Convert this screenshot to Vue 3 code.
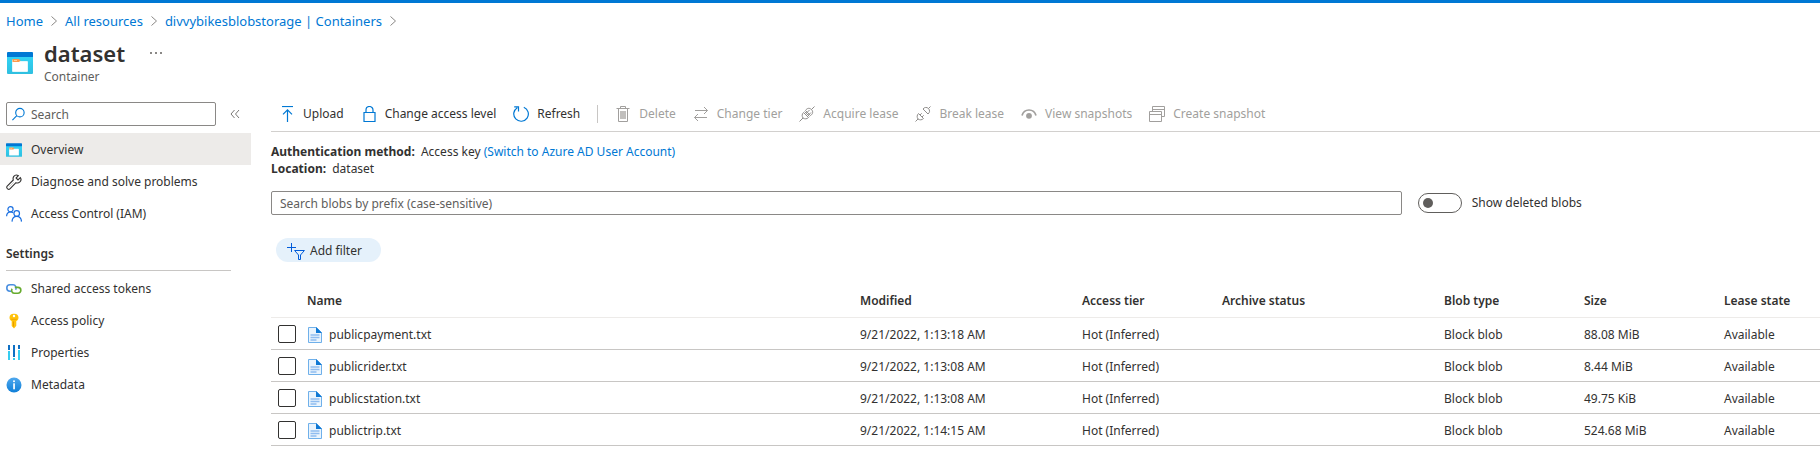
<script setup>
import { ref } from 'vue'

const crumbs = ['Home', 'All resources', 'divvybikesblobstorage | Containers']

const topNav = [
  { label: 'Overview', icon: 'container', active: true },
  { label: 'Diagnose and solve problems', icon: 'wrench' },
  { label: 'Access Control (IAM)', icon: 'people' },
]
const settingsNav = [
  { label: 'Shared access tokens', icon: 'chain' },
  { label: 'Access policy', icon: 'key' },
  { label: 'Properties', icon: 'bars' },
  { label: 'Metadata', icon: 'info' },
]

const primaryCommands = [
  { label: 'Upload', icon: 'upload' },
  { label: 'Change access level', icon: 'lock' },
  { label: 'Refresh', icon: 'refresh' },
]
const blobCommands = [
  { label: 'Delete', icon: 'trash' },
  { label: 'Change tier', icon: 'swap' },
  { label: 'Acquire lease', icon: 'plug' },
  { label: 'Break lease', icon: 'unplug' },
  { label: 'View snapshots', icon: 'eye' },
  { label: 'Create snapshot', icon: 'windows' },
]

const blobs = ref([
  { name: 'publicpayment.txt', modified: '9/21/2022, 1:13:18 AM', size: '88.08 MiB', selected: false },
  { name: 'publicrider.txt', modified: '9/21/2022, 1:13:08 AM', size: '8.44 MiB', selected: false },
  { name: 'publicstation.txt', modified: '9/21/2022, 1:13:08 AM', size: '49.75 KiB', selected: false },
  { name: 'publictrip.txt', modified: '9/21/2022, 1:14:15 AM', size: '524.68 MiB', selected: false },
])

const menuFilter = ref('')
const prefix = ref('')
const showDeleted = ref(false)
</script>

<template>
  <div class="portal">
    <svg class="sprite" aria-hidden="true">
      <defs>
        <linearGradient id="cyan" x1="0" y1="0" x2="0" y2="1">
          <stop offset="0" stop-color="#32d4f5" />
          <stop offset="1" stop-color="#2fbfe0" />
        </linearGradient>
        <linearGradient id="infoBlue" x1="0" y1="0" x2="0" y2="1">
          <stop offset="0" stop-color="#4fa8ee" />
          <stop offset="1" stop-color="#0f7fd8" />
        </linearGradient>
      </defs>
      <symbol id="container" viewBox="0 0 26 22">
        <rect y="4" width="26" height="18" rx="1" fill="url(#cyan)" />
        <path d="M0 5V1a1 1 0 0 1 1-1h24a1 1 0 0 1 1 1v4z" fill="#0078d4" />
        <path d="M5 8.500a1 1 0 0 1 1-1h5.500l1.500 1.500h7a1 1 0 0 1 1 1V19a1 1 0 0 1-1 1H6a1 1 0 0 1-1-1z" fill="#e3f7fb" />
        <rect x="6" y="10" width="14" height="9" fill="#fff" />
        <path d="M5.500 7h6.500l1.500 1.500-1.500 1.500H5.500z" fill="#ff9a4a" />
        <rect x="7" y="8" width="3" height="1" fill="#ffd0a0" />
      </symbol>
      <symbol id="wrench" viewBox="0 0 16 16">
        <path d="M14.300 3.600 12 5.900 10.100 4l2.300-2.300C10.900.7 8.900 1 7.800 2.400 7 3.500 6.900 4.800 7.300 6L1.200 12.100a1.600 1.600 0 0 0 0 2.300l.4.400c.7.600 1.700.6 2.300 0L10 8.700c1.300.5 2.800.2 3.900-.8 1.200-1.200 1.400-3 .4-4.300z" fill="#fff" stroke="#323130" stroke-width="1.100" />
        <path d="m2.800 13.200 5-5" stroke="#c8c6c4" stroke-width=".8" />
      </symbol>
      <symbol id="people" viewBox="0 0 16 16">
        <g fill="none" stroke="#1a6fe0" stroke-width="1.200">
          <circle cx="4.500" cy="3.300" r="2.600" />
          <path d="M.6 10.200c0-2.500 1.600-4.200 3.900-4.200 1 0 1.900.3 2.600.9" />
          <circle cx="10.700" cy="7.500" r="2.800" />
          <path d="M6 15.600c.2-3 2-5.200 4.700-5.200s4.600 2.200 4.800 5.200" />
        </g>
      </symbol>
      <symbol id="chain" viewBox="0 0 16 16">
        <g fill="none" stroke-width="1.600">
          <path d="M5.500 10.200H4A3.200 3.200 0 0 1 4 3.800h3a3.200 3.200 0 0 1 2.600 5" stroke="#4a8fe0" />
          <path d="M8.800 6.400h3.100a2.900 2.900 0 0 1 0 5.900H8.600a2.900 2.900 0 0 1-2.500-4.500" stroke="#67ab2f" />
        </g>
      </symbol>
      <symbol id="key" viewBox="0 0 16 16">
        <path d="M7.500.7h1c2.400 0 4 1.500 4 3.800 0 1.700-.8 2.900-2.200 3.600v4.700L8 15.500 5.700 13V8.100C4.300 7.400 3.500 6.200 3.500 4.500 3.500 2.200 5.100.7 7.500.7z" fill="#ffc20a" />
        <circle cx="8" cy="3" r="1.200" fill="#fff" />
        <path d="M7 8.500v4.600l1 1.100V8.500z" fill="#e89b00" />
        <path d="M5.200 6.300h5.600" stroke="#f2a600" />
      </symbol>
      <symbol id="bars" viewBox="0 0 16 16">
        <path d="M2 0h2v5H2zM7 0h2v12H7zM12 0h2v4h-2z" fill="#0f70c4" />
        <path d="M2 6h2v9H2zM7 13h2v2H7zM12 5h2v10h-2z" fill="#36cdf0" />
      </symbol>
      <symbol id="info" viewBox="0 0 16 16">
        <circle cx="8" cy="8" r="7.500" fill="url(#infoBlue)" />
        <circle cx="8" cy="4.300" r="1" fill="#fff" />
        <rect x="7.200" y="6.300" width="1.700" height="6" fill="#fff" />
      </symbol>
      <symbol id="search" viewBox="0 0 16 16">
        <g fill="none" stroke="#0078d4" stroke-width="1.200">
          <circle cx="9.500" cy="6" r="4.500" />
          <path d="M6.200 9.300 1.500 14" />
        </g>
      </symbol>
      <symbol id="collapse" viewBox="0 0 10 10">
        <path d="M4.500 1 1 5l3.500 4M9 1 5.500 5 9 9" fill="none" stroke="#7a7876" />
      </symbol>
      <symbol id="chevron" viewBox="0 0 8 12">
        <path d="m1.500 1.500 5 4.500-5 4.500" fill="none" stroke="#8a8886" />
      </symbol>
      <symbol id="upload" viewBox="0 0 16 16">
        <g fill="none" stroke="#0078d4">
          <path d="M3 .5h11" stroke-width="1.200" />
          <path d="M8.500 16V4M4 8.300l4.500-4.500L13 8.300" stroke-width="1.200" />
        </g>
      </symbol>
      <symbol id="lock" viewBox="0 0 16 16">
        <path d="M3 6.500h11v9H3zM5 6.500V4a3.500 3.500 0 0 1 7 0v2.500" fill="none" stroke="#0078d4" stroke-width="1.200" />
      </symbol>
      <symbol id="refresh" viewBox="0 0 16 16">
        <path d="M10.800 1.200a7.300 7.300 0 1 1-6.500.500M1.200.900H5.500V5.500" fill="none" stroke="#0078d4" stroke-width="1.200" />
      </symbol>
      <symbol id="trash" viewBox="0 0 16 16">
        <g fill="none" stroke="#a19f9d">
          <path d="M1.500 2.500h13M5.500 2.500v-2h5v2M3.500 2.500v13h9v-13" />
        </g>
        <rect x="5" y="5" width="6" height="8" fill="#c1bfbd" />
      </symbol>
      <symbol id="swap" viewBox="0 0 16 16">
        <path d="M2 4.500h12.500M11 1l3.500 3.500L11 8M14 11.500H1.500M5 8l-3.500 3.500L5 15" fill="none" stroke="#a19f9d" />
      </symbol>
      <symbol id="plug" viewBox="0 0 16 16">
        <g fill="none" stroke="#8f8d8b">
          <path d="M.5 15.500 4 12M12.500 3.500l3-3M5.500 5.500l5 5M4.500 6.500c-1.700 1.700-1.700 3.700-.5 5.500 1.800 1.200 3.800 1.200 5.500-.5zM6.500 4.500c1.700-2.700 4-2.700 6-1 1.700 2 1.700 4.300-1 6z" />
          <path d="m7.500 7 3-3M9.500 9l2.500-2.500" />
        </g>
      </symbol>
      <symbol id="unplug" viewBox="0 0 16 16">
        <g fill="none" stroke="#8f8d8b">
          <path d="m.5 15.500 2.500-2.500M13.500 2.500l2-2M3.500 7.500l5 5c-1.700 1.700-3.700 1.700-5.500.5-1.200-1.800-1.200-3.800.5-5.500zM8 3l5 5c2-1.600 2-3.800.5-5.500C11.800 1 9.600 1 8 3z" />
          <path d="m5 9 1.700-1.700M7 11l1.700-1.700" />
        </g>
      </symbol>
      <symbol id="eye" viewBox="0 0 16 16">
        <path d="M1 9.500C2 6 4.800 4 8 4s6 2 7 5.500" fill="none" stroke="#a19f9d" stroke-width="1.700" />
        <circle cx="8" cy="9.800" r="2.900" fill="#a19f9d" />
      </symbol>
      <symbol id="windows" viewBox="0 0 16 16">
        <path d="M.5 5.500h12v10H.5zM.5 8.500h12M3.500 5.500v-5h12v10h-3M3.500 3.500h12" fill="none" stroke="#a19f9d" />
      </symbol>
      <symbol id="filter" viewBox="0 0 18 18">
        <g fill="none" stroke="#015cda">
          <path d="M0 5.500h9M4.500 1v9" />
          <path d="M7.600 8.500h9.800l-3.900 4.500v4.500h-2V13z" />
        </g>
      </symbol>
      <symbol id="file" viewBox="0 0 14 16">
        <path d="M.5.500h8l5 5v10H.5z" fill="#eaf4fd" stroke="#6fb0ea" />
        <path d="M8 0v6h6z" fill="#0f78d4" />
        <path d="M2.500 8h9M2.500 10.500h9M2.500 13h6" stroke="#8fbcf0" stroke-width="1.500" />
      </symbol>
    </svg>

    <nav class="crumbs" aria-label="Breadcrumb">
      <template v-for="crumb in crumbs" :key="crumb">
        <a href="#">{{ crumb }}</a>
        <svg class="chevron"><use href="#chevron" /></svg>
      </template>
    </nav>

    <header class="title">
      <svg class="title-icon"><use href="#container" /></svg>
      <div>
        <div class="title-line">
          <h1>dataset</h1>
          <button class="more" type="button" aria-label="More"><i></i><i></i><i></i></button>
        </div>
        <p>Container</p>
      </div>
    </header>

    <div class="body">
      <aside class="side">
        <div class="side-search">
          <label class="search-box">
            <svg class="search-icon"><use href="#search" /></svg>
            <input v-model="menuFilter" type="text" placeholder="Search" aria-label="Search menu" />
          </label>
          <button class="collapse" type="button" aria-label="Collapse menu">
            <svg><use href="#collapse" /></svg>
          </button>
        </div>
        <a v-for="item in topNav" :key="item.label" href="#" class="nav-item" :class="{ active: item.active }">
          <svg class="nav-icon"><use :href="'#' + item.icon" /></svg>{{ item.label }}
        </a>
        <h2>Settings</h2>
        <a v-for="item in settingsNav" :key="item.label" href="#" class="nav-item">
          <svg class="nav-icon"><use :href="'#' + item.icon" /></svg>{{ item.label }}
        </a>
      </aside>

      <main class="main">
        <div class="toolbar">
          <button v-for="c in primaryCommands" :key="c.label" type="button">
            <svg class="cmd-icon"><use :href="'#' + c.icon" /></svg>{{ c.label }}
          </button>
          <span class="divider"></span>
          <button v-for="c in blobCommands" :key="c.label" type="button" disabled>
            <svg class="cmd-icon"><use :href="'#' + c.icon" /></svg>{{ c.label }}
          </button>
        </div>

        <div class="facts">
          <div><b>Authentication method:</b> Access key <a href="#">(Switch to Azure AD User Account)</a></div>
          <div><b>Location:</b> dataset</div>
        </div>

        <div class="prefix-row">
          <input v-model="prefix" class="prefix" type="text" placeholder="Search blobs by prefix (case-sensitive)" aria-label="Search blobs by prefix" />
          <label class="switch">
            <input v-model="showDeleted" type="checkbox" role="switch" />
            Show deleted blobs
          </label>
        </div>

        <button class="add-filter" type="button">
          <svg><use href="#filter" /></svg>Add filter
        </button>

        <table>
          <colgroup>
            <col class="c-check" /><col /><col class="c-wide" /><col class="c-narrow" />
            <col class="c-wide" /><col class="c-narrow" /><col class="c-narrow" /><col class="c-last" />
          </colgroup>
          <thead>
            <tr>
              <th></th>
              <th>Name</th>
              <th>Modified</th>
              <th>Access tier</th>
              <th>Archive status</th>
              <th>Blob type</th>
              <th>Size</th>
              <th>Lease state</th>
            </tr>
          </thead>
          <tbody>
            <tr v-for="blob in blobs" :key="blob.name">
              <td class="check"><input v-model="blob.selected" type="checkbox" :aria-label="'Select ' + blob.name" /></td>
              <td>
                <span class="file"><svg><use href="#file" /></svg>{{ blob.name }}</span>
              </td>
              <td>{{ blob.modified }}</td>
              <td>Hot (Inferred)</td>
              <td></td>
              <td>Block blob</td>
              <td>{{ blob.size }}</td>
              <td>Available</td>
            </tr>
          </tbody>
        </table>
      </main>
    </div>
  </div>
</template>

<style>
body {
  background: #fff;
}
</style>

<style scoped>
.portal {
  border-top: 3px solid #0078d4;
  font: 12px/18px "Noto Sans", "Open Sans", sans-serif;
  color: #323130;
}
.portal * {
  box-sizing: border-box;
}
.sprite {
  position: absolute;
  width: 0;
  height: 0;
}
svg {
  flex: none;
}
a {
  color: #0078d4;
  text-decoration: none;
}
button {
  padding: 0;
  border: 0;
  background: none;
  font: inherit;
  color: inherit;
}
input {
  font: inherit;
  color: inherit;
  margin: 0;
}
input::placeholder {
  color: #605e5c;
  opacity: 1;
}
.crumbs {
  display: flex;
  align-items: center;
  gap: 7px;
  height: 36px;
  padding-left: 6px;
  font-size: 13px;
}
.chevron {
  width: 8px;
  height: 12px;
}
.title {
  display: flex;
  align-items: center;
  gap: 11px;
  height: 48px;
  padding-left: 7px;
}
.title-icon {
  width: 26px;
  height: 22px;
}
.title-line {
  display: flex;
  align-items: center;
  gap: 25px;
}
h1 {
  margin: 0;
  font-size: 22px;
  line-height: 28px;
  font-weight: 600;
}
.more {
  display: flex;
  gap: 3px;
}
.more i {
  width: 2px;
  height: 2px;
  background: #8a8886;
}
.title p {
  margin: 0;
  line-height: 20px;
  color: #605e5c;
}
.body {
  display: grid;
  grid-template-columns: 251px minmax(0, 1fr);
  column-gap: 20px;
  padding-top: 15px;
}
.side-search {
  display: flex;
  align-items: center;
  gap: 14px;
  padding-left: 6px;
  margin-bottom: 7px;
}
.search-box {
  display: flex;
  align-items: center;
  gap: 5px;
  width: 210px;
  height: 24px;
  padding-left: 4px;
  border: 1px solid #8a8886;
  border-radius: 2px;
}
.search-box input {
  min-width: 0;
  flex: 1;
  padding: 1px 0 0;
  border: 0;
  outline: 0;
}
.search-icon {
  width: 15px;
  height: 15px;
}
.collapse svg {
  display: block;
  width: 10px;
  height: 10px;
}
.nav-item {
  display: flex;
  align-items: center;
  gap: 9px;
  height: 32px;
  padding: 1px 0 0 6px;
  color: #323130;
}
.nav-item.active {
  background: #edebe9;
}
.side-search {
  margin-bottom: 7px;
}
.nav-icon {
  width: 16px;
  height: 16px;
}
h2 {
  margin: 15px 20px 1px 6px;
  height: 27px;
  border-bottom: 1px solid #c8c6c4;
  font-size: 12px;
  line-height: 20px;
  font-weight: 600;
}
.toolbar {
  display: flex;
  align-items: center;
  gap: 17px;
  height: 30px;
  padding: 0 0 5px 8px;
  border-bottom: 1px solid #d2d0ce;
}
.toolbar button {
  display: flex;
  align-items: center;
  gap: 8px;
  white-space: nowrap;
}
.toolbar button:disabled {
  color: #a19f9d;
}
.cmd-icon {
  width: 16px;
  height: 16px;
}
.divider {
  width: 1px;
  height: 18px;
  background: #c8c6c4;
}
.facts {
  padding-top: 11px;
  line-height: 17px;
}
.facts b {
  margin-right: 3px;
}
.prefix-row {
  display: flex;
  align-items: center;
  gap: 16px;
  margin-top: 14px;
}
.prefix {
  flex: 0 0 73%;
  height: 24px;
  padding: 0 8px;
  border: 1px solid #8a8886;
  border-radius: 2px;
}
.switch {
  display: flex;
  align-items: center;
  gap: 10px;
  white-space: nowrap;
}
.switch input {
  appearance: none;
  display: flex;
  align-items: center;
  width: 44px;
  height: 20px;
  padding: 0 4px;
  border: 1px solid #605e5c;
  border-radius: 10px;
}
.switch input::before {
  content: "";
  width: 10px;
  height: 10px;
  border-radius: 50%;
  background: #605e5c;
}
.switch input:checked {
  justify-content: flex-end;
}
.add-filter {
  display: flex;
  align-items: center;
  gap: 5px;
  height: 24px;
  margin: 23px 0 20px 5px;
  padding: 1px 19px 0 11px;
  border-radius: 12px;
  background: #e5f1fb;
}
.add-filter svg {
  width: 18px;
  height: 18px;
}
table {
  width: 100%;
  table-layout: fixed;
  border-collapse: separate;
  border-spacing: 0;
}
.c-check {
  width: 36px;
}
.c-wide {
  width: 222px;
}
.c-narrow {
  width: 140px;
}
.c-last {
  width: 96px;
}
th,
td {
  height: 32px;
  padding: 2px 0 0;
  text-align: left;
  white-space: nowrap;
  border-bottom: 1px solid #c8c6c4;
}
th {
  height: 36px;
  font-weight: 600;
  border-bottom-color: #edebe9;
}
.check {
  padding-top: 0;
}
.check input {
  appearance: none;
  display: block;
  width: 18px;
  height: 18px;
  margin-left: 7px;
  border: 1px solid #323130;
  border-radius: 2px;
}
.check input:checked {
  background: #0078d4;
}
.file {
  display: flex;
  align-items: center;
  gap: 7px;
}
.file svg {
  width: 14px;
  height: 16px;
  margin-left: 1px;
}
</style>
